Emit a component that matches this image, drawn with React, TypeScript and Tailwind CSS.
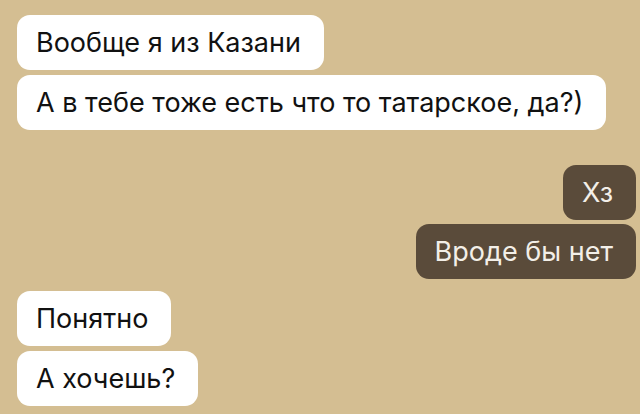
import React from 'react';

type Msg = { text: string; out?: boolean };

const Bubble = ({ text, out }: Msg) => (
  <div
    className={`h-[55px] flex items-center rounded-[13px] pl-[19px] pr-[23px] text-[27px] leading-none whitespace-nowrap ${
      out ? 'bg-[#5a4b3a] text-[#f3efe8] self-end' : 'bg-white text-[#111111] self-start'
    }`}
  >
    {text}
  </div>
);

const App = () => {
  return (
    <div
      className="w-[640px] h-[414px] bg-[#d4be92] overflow-hidden pl-[17px] pr-[4px] pt-[15px] flex flex-col"
      style={{ fontFamily: 'Inter, Roboto, "Liberation Sans", sans-serif' }}
    >
      {/* Incoming */}
      <div className="flex flex-col gap-[5px]">
        <Bubble text="Вообще я из Казани" />
        <Bubble text="А в тебе тоже есть что то татарское, да?)" />
      </div>

      {/* Outgoing */}
      <div className="flex flex-col gap-[4px] mt-[35px]">
        <Bubble out text="Хз" />
        <Bubble out text="Вроде бы нет" />
      </div>

      {/* Incoming */}
      <div className="flex flex-col gap-[5px] mt-[12px]">
        <Bubble text="Понятно" />
        <Bubble text="А хочешь?" />
      </div>
    </div>
  );
};

export default App;
